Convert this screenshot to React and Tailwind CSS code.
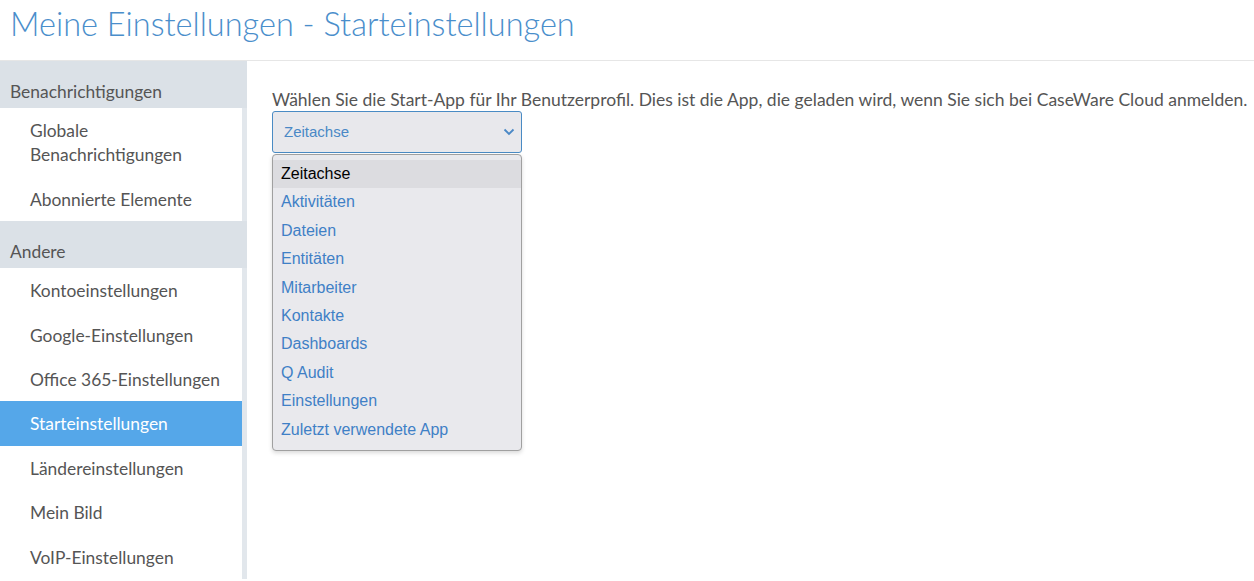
import React from 'react';

const gruppen = [
  {
    titel: 'Benachrichtigungen',
    items: ['Globale Benachrichtigungen', 'Abonnierte Elemente'],
  },
  {
    titel: 'Andere',
    items: [
      'Kontoeinstellungen',
      'Google-Einstellungen',
      'Office 365-Einstellungen',
      'Starteinstellungen',
      'Ländereinstellungen',
      'Mein Bild',
      'VoIP-Einstellungen',
    ],
  },
];

const apps = [
  'Zeitachse',
  'Aktivitäten',
  'Dateien',
  'Entitäten',
  'Mitarbeiter',
  'Kontakte',
  'Dashboards',
  'Q Audit',
  'Einstellungen',
  'Zuletzt verwendete App',
];

const aktiv = 'Starteinstellungen';

const Sidebar = () => (
  <aside className="w-[247px] shrink-0 bg-[#e2e7ec]">
    {gruppen.map((g) => (
      <div key={g.titel}>
        <div className="h-[47px] bg-[#dbe1e7] pl-[10px] pt-[18px] text-[17.4px] leading-[25px] text-[#555]">
          {g.titel}
        </div>
        <ul className="w-[242px] bg-white">
          {g.items.map((item) => (
            <li
              key={item}
              className={
                item === aktiv
                  ? 'bg-[#55a7e9] pt-[11px] pb-[9px] pl-[30px] pr-3 text-[17.4px] leading-[24.4px] text-white'
                  : 'pt-[11px] pb-[9px] pl-[30px] pr-3 text-[17.4px] leading-[24.4px] text-[#555]'
              }
            >
              {item}
            </li>
          ))}
        </ul>
      </div>
    ))}
  </aside>
);

const StartAppSelect = () => (
  <div className="w-[250px]">
    <div className="flex h-[42px] items-center justify-between rounded-[3px] border border-[#4a8bc4] bg-[#e8e8ec] pl-[11px] pr-[6px] font-['Liberation_Sans',Arial,sans-serif] text-[15px] text-[#4a88c6]">
      <span>Zeitachse</span>
      <svg width="12" height="8" viewBox="0 0 12 8" fill="none">
        <path d="M1.5 1.5 6 6l4.5-4.5" stroke="#4a88c6" strokeWidth="1.8" />
      </svg>
    </div>
    <ul className="mt-px rounded-[4px] border border-[#a0a0a0] bg-[#e9e9ed] pt-[5px] pb-[6px] font-['Liberation_Sans',Arial,sans-serif] text-[16px] shadow-[0_2px_4px_rgba(0,0,0,0.15)]">
      {apps.map((app, i) => (
        <li
          key={app}
          className={
            i === 0
              ? 'h-[28.4px] bg-[#dcdce0] pl-[8px] leading-[28.4px] text-black'
              : 'h-[28.4px] pl-[8px] leading-[28.4px] text-[#3f80c6]'
          }
        >
          {app}
        </li>
      ))}
    </ul>
  </div>
);

export default function App() {
  return (
    <div className="min-h-[581px] bg-white font-['Lato','Open_Sans',sans-serif]">
      <header className="h-[61px] border-b border-[#e6e6e6] pl-[10px]">
        <h1 className="pt-[3px] text-[32.5px] font-light leading-[42px] text-[#4a8ecb]">
          Meine Einstellungen - Starteinstellungen
        </h1>
      </header>
      <div className="flex">
        <Sidebar />
        <main className="flex-1 pl-[25px] pt-[28px]">
          <p className="whitespace-nowrap text-[17.5px] leading-[22px] text-[#555]">
            Wählen Sie die Start-App für Ihr Benutzerprofil. Dies ist die App, die geladen wird, wenn Sie sich bei CaseWare Cloud anmelden.
          </p>
          <StartAppSelect />
        </main>
      </div>
    </div>
  );
}
